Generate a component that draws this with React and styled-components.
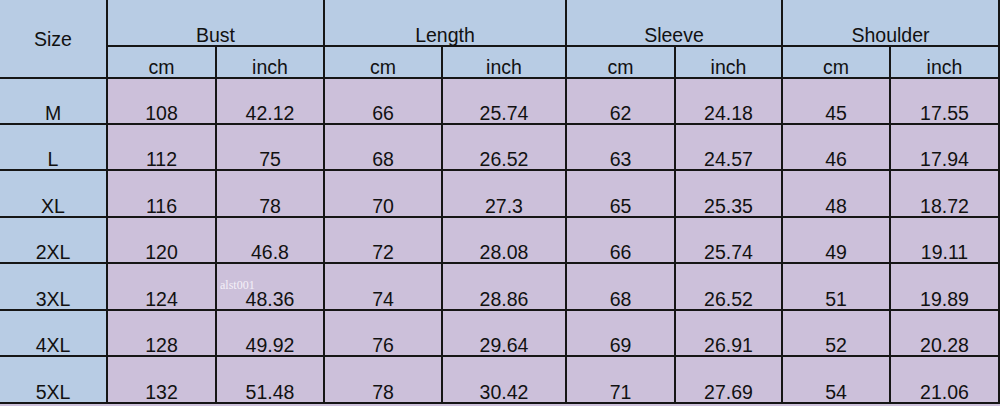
import React from 'react';
import styled, { createGlobalStyle } from 'styled-components';

const GlobalStyle = createGlobalStyle`
  html, body {
    margin: 0;
    padding: 0;
    background: #ccc0da;
  }
  * {
    box-sizing: border-box;
  }
`;

const BLUE = '#b8cce4';
const LILAC = '#ccc0da';
const LINE = '#151515';

const Table = styled.div`
  display: grid;
  grid-template-columns: 108px 109px 108px 118px 124px 109px 107px 108px 109px;
  grid-template-rows: 47px 32px 46px 46px 47px 46px 47px 46px 47px;
  width: 1000px;
  font-family: 'Liberation Sans', Arial, sans-serif;
  font-size: 19.5px;
  line-height: 20px;
  color: #111;
`;

const Cell = styled.div`
  position: relative;
  display: flex;
  justify-content: center;
  align-items: ${(p) => (p.$middle ? 'center' : 'flex-end')};
  background: ${(p) => (p.$blue ? BLUE : LILAC)};
  border-right: 2px solid ${LINE};
  border-bottom: 2px solid ${LINE};
  grid-column: ${(p) => p.$col || 'auto'};
  grid-row: ${(p) => p.$row || 'auto'};
  white-space: nowrap;
`;

const Watermark = styled.span`
  position: absolute;
  left: 3px;
  top: 15px;
  font-family: 'Liberation Serif', 'Times New Roman', serif;
  font-size: 12px;
  line-height: 12px;
  color: #f4f0f8;
`;

const groups = ['Bust', 'Length', 'Sleeve', 'Shoulder'];

const rows = [
  ['M', '108', '42.12', '66', '25.74', '62', '24.18', '45', '17.55'],
  ['L', '112', '75', '68', '26.52', '63', '24.57', '46', '17.94'],
  ['XL', '116', '78', '70', '27.3', '65', '25.35', '48', '18.72'],
  ['2XL', '120', '46.8', '72', '28.08', '66', '25.74', '49', '19.11'],
  ['3XL', '124', '48.36', '74', '28.86', '68', '26.52', '51', '19.89'],
  ['4XL', '128', '49.92', '76', '29.64', '69', '26.91', '52', '20.28'],
  ['5XL', '132', '51.48', '78', '30.42', '71', '27.69', '54', '21.06'],
];

export default function App() {
  return (
    <>
      <GlobalStyle />
      <Table>
        <Cell $blue $middle $col="1" $row="1 / span 2">
          Size
        </Cell>
        {groups.map((g, i) => (
          <Cell key={g} $blue $col={`${2 + i * 2} / span 2`} $row="1">
            {g}
          </Cell>
        ))}
        {groups.map((g) => (
          <React.Fragment key={g + '-units'}>
            <Cell $blue $row="2">cm</Cell>
            <Cell $blue $row="2">inch</Cell>
          </React.Fragment>
        ))}
        {rows.map((r) =>
          r.map((v, i) => (
            <Cell key={r[0] + i} $blue={i === 0}>
              {r[0] === '3XL' && i === 2 && <Watermark>alst001</Watermark>}
              {v}
            </Cell>
          ))
        )}
      </Table>
    </>
  );
}
